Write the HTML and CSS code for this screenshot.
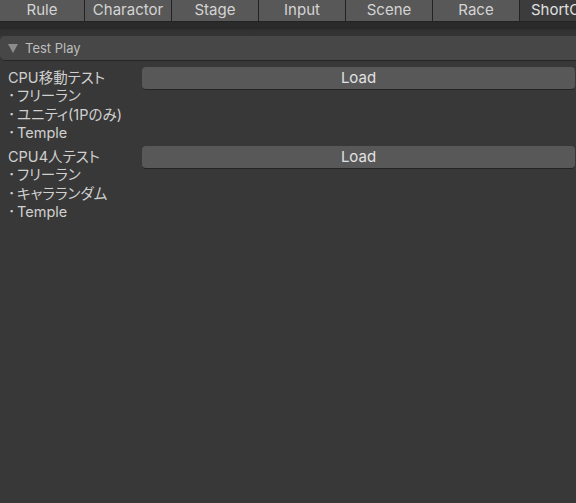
FILE: index.html
```html
<!DOCTYPE html>
<html lang="ja">
<head>
<meta charset="utf-8">
<link rel="stylesheet" href="styles.css">
</head>
<body>
<div class="tabs">
  <div class="tab first">Rule</div>
  <div class="tab">Charactor</div>
  <div class="tab">Stage</div>
  <div class="tab">Input</div>
  <div class="tab">Scene</div>
  <div class="tab">Race</div>
  <div class="tab selected">ShortC</div>
</div>
<div class="strip"></div>
<div class="foldout">
  <svg class="arrow" width="10" height="9" viewBox="0 0 10 9"><polygon points="0,0 10,0 5,9" fill="#8c8c8c"/></svg>
  <span class="foldout-title">Test Play</span>
</div>
<div class="content">
  <div class="row">
    <div class="label">
      <div>CPU移動テスト</div>
      <div><span class="dot">･</span>フリーラン</div>
      <div><span class="dot">･</span>ユニティ(1Pのみ)</div>
      <div><span class="dot">･</span>Temple</div>
    </div>
    <div class="btn">Load</div>
  </div>
  <div class="row">
    <div class="label">
      <div>CPU4人テスト</div>
      <div><span class="dot">･</span>フリーラン</div>
      <div><span class="dot">･</span>キャラランダム</div>
      <div><span class="dot">･</span>Temple</div>
    </div>
    <div class="btn">Load</div>
  </div>
</div>
</body>
</html>
```
FILE: styles.css
```css
html, body {
  margin: 0;
  padding: 0;
  background: #383838;
  width: 576px;
  height: 503px;
  overflow: hidden;
  font-family: Inter, "Noto Sans CJK JP", sans-serif;
  color: #d2d2d2;
}
.tabs {
  display: flex;
  height: 21px;
  border-bottom: 1px solid #232323;
  white-space: nowrap;
  overflow: hidden;
}
.tab {
  flex: 0 0 86px;
  background: #585858;
  border-right: 1px solid #232323;
  font-size: 15px;
  line-height: 20px;
  text-align: center;
  color: #d4d4d4;
  overflow: hidden;
}
.tab.first {
  flex-basis: 84px;
}
.tab.selected {
  flex: 1 1 auto;
  background: #3c3c3c;
  color: #e0e0e0;
  border-right: none;
  text-align: left;
  padding-left: 11px;
}
.strip {
  height: 14px;
  background: linear-gradient(#2a2a2a 0, #2a2a2a 7px, #323232 8px, #333 14px);
}
.foldout {
  display: flex;
  align-items: center;
  height: 24px;
  background: #474747;
  border-bottom: 1px solid #262626;
  border-radius: 5px 0 0 5px;
  padding-left: 8px;
  gap: 7px;
}
.arrow {
  display: block;
}
.foldout-title {
  font-size: 13px;
  color: #bdbdbd;
}
.content {
  padding: 6px 1px 0 8px;
  display: flex;
  flex-direction: column;
  gap: 5px;
}
.row {
  display: grid;
  grid-template-columns: 134px 1fr;
  align-items: start;
}
.label {
  padding-top: 1.5px;
  margin-bottom: -1.5px;
  font-size: 14.5px;
  line-height: 18.5px;
  color: #d0d0d0;
  white-space: nowrap;
  font-feature-settings: "palt" 1;
}
.dot {
  display: inline-block;
  width: 9px;
}
.btn {
  height: 22px;
  background: #585858;
  border-bottom: 1px solid #242424;
  border-radius: 4px;
  font-size: 15px;
  line-height: 22px;
  text-align: center;
  color: #e2e2e2;
}
```
